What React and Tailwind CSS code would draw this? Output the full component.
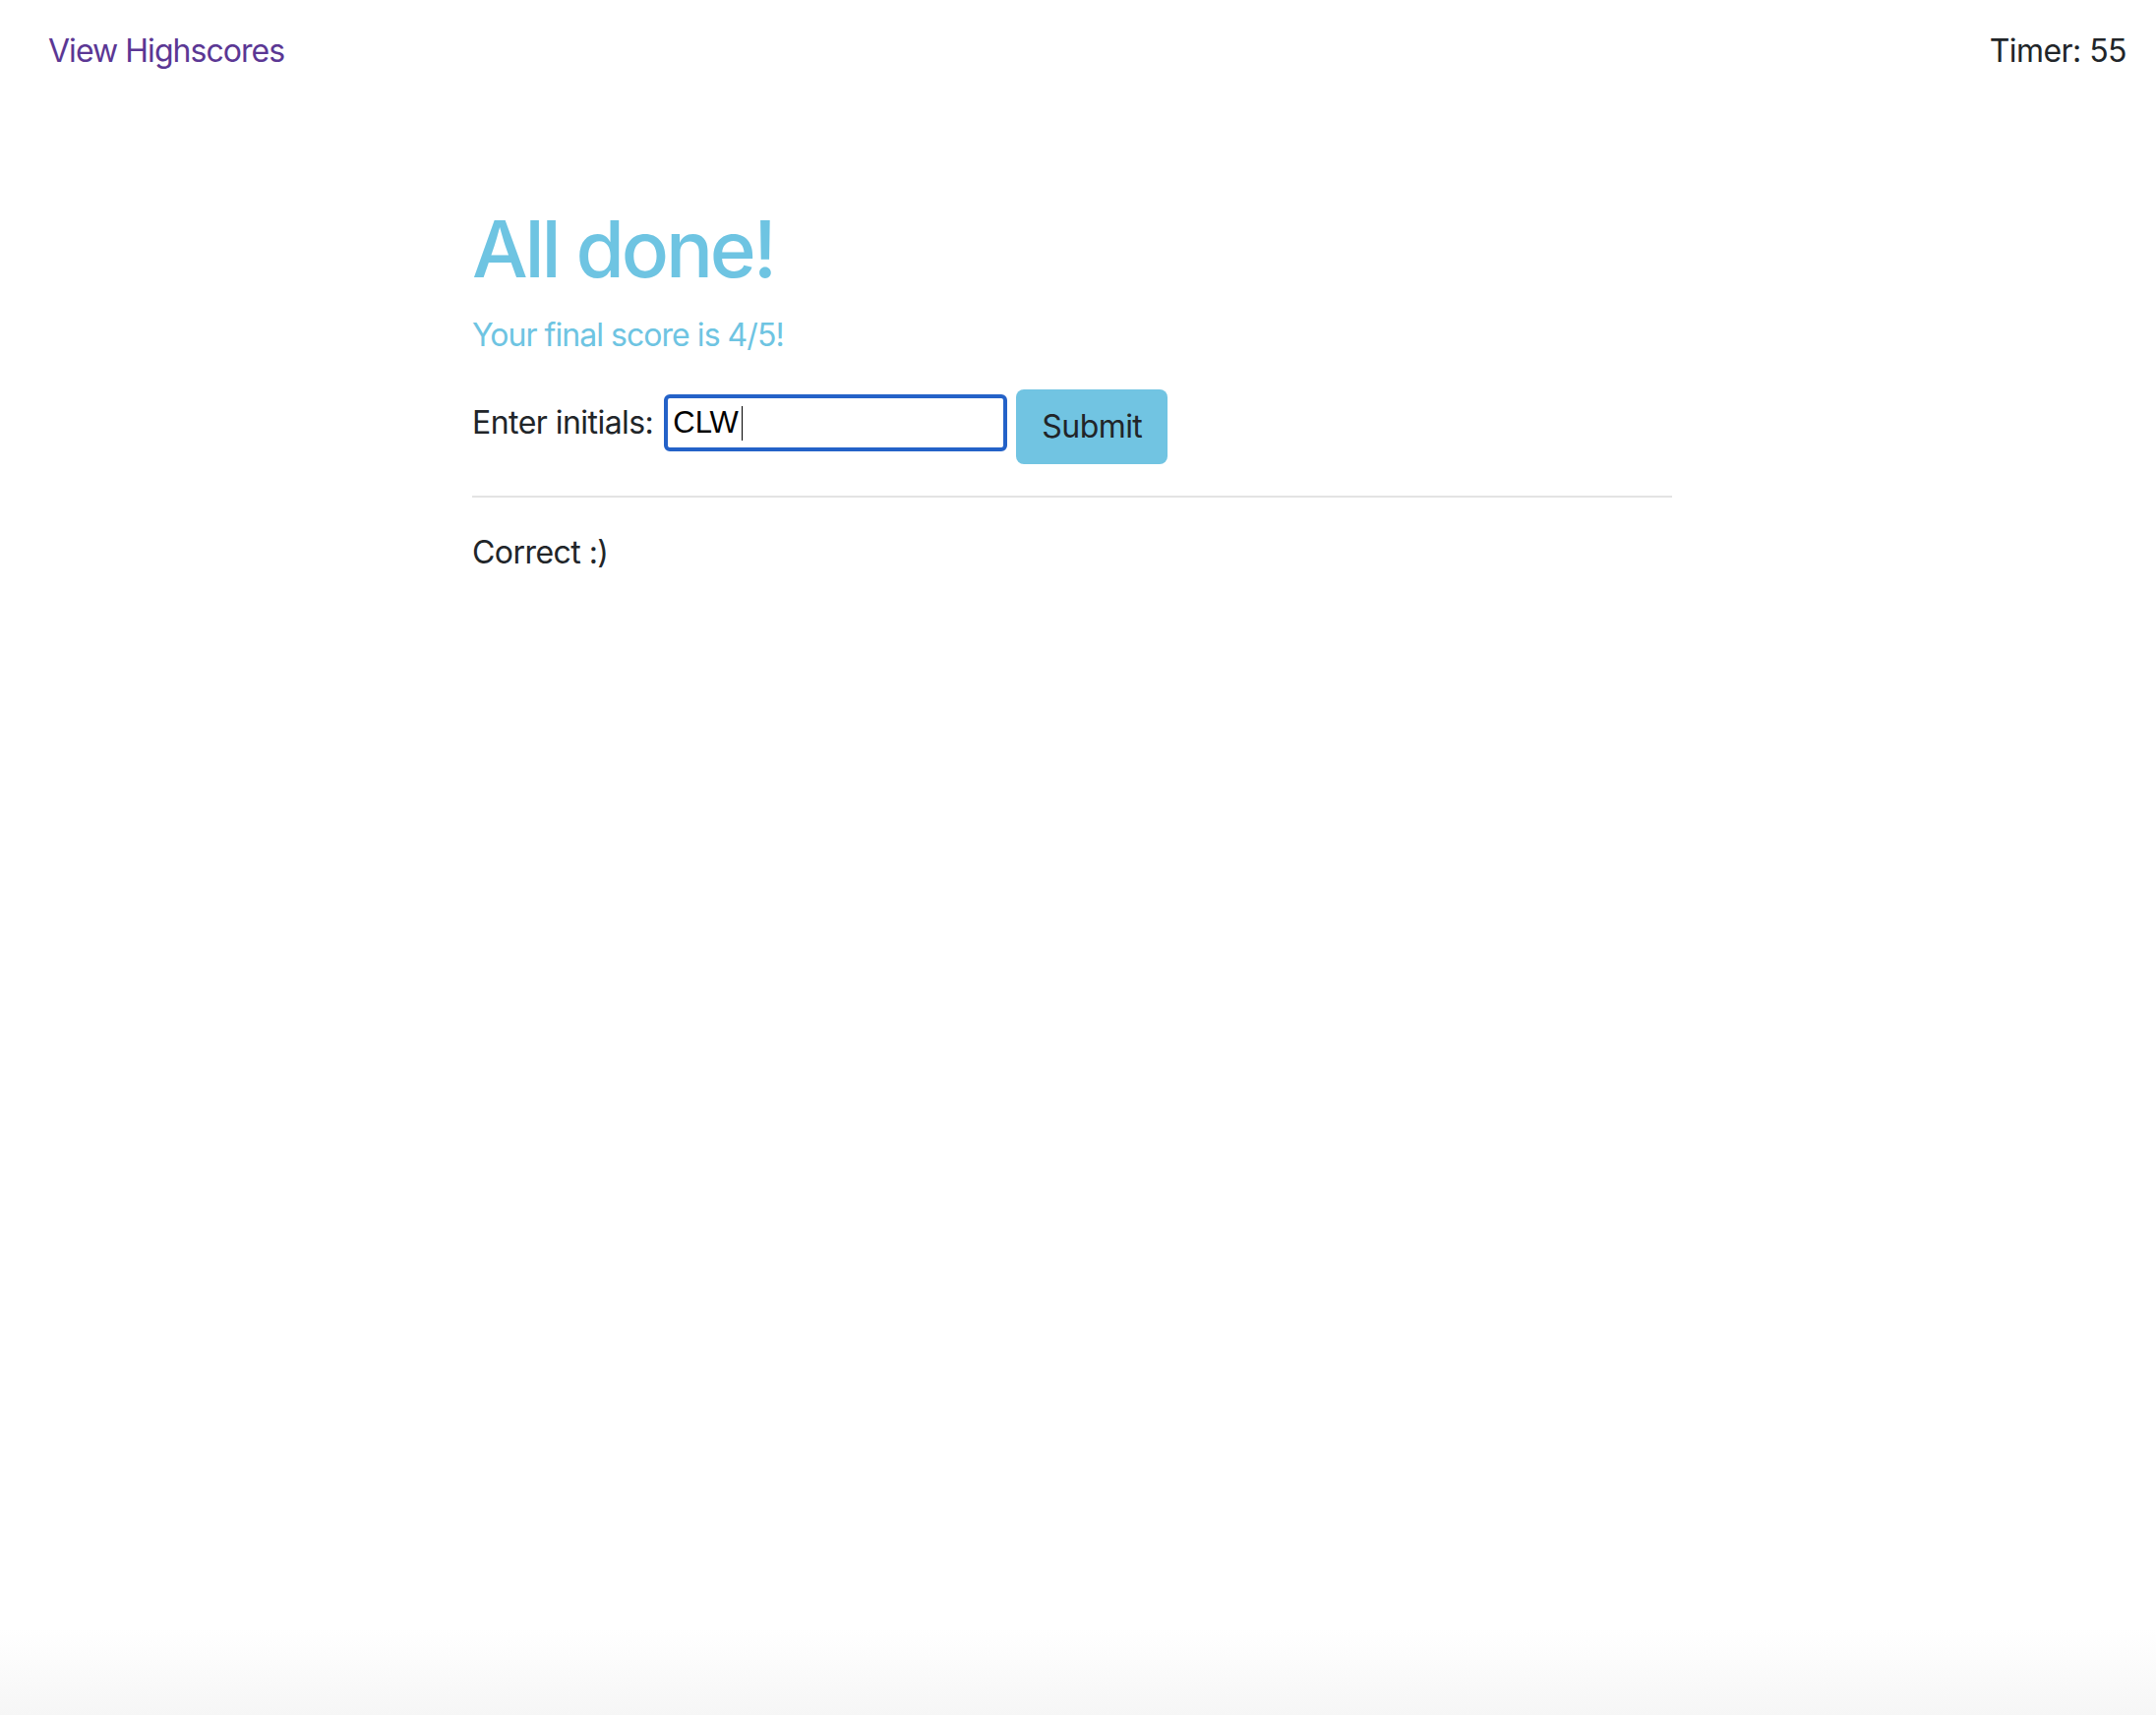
export default function App() {
  return (
    <div className="min-h-[1744px] bg-[linear-gradient(to_bottom,#ffffff_95%,#f6f6f6)] font-['Inter',sans-serif] tracking-[-0.034em] text-[#212529]">
      <header className="flex items-start justify-between pl-[49px] pr-[30px] pt-[28px] text-[32px] leading-[48px]">
        <a href="#" className="tracking-[-0.03em] text-[#5b3794]">
          View Highscores
        </a>
        <span>Timer: 55</span>
      </header>

      <main className="ml-[480px] mt-[129px] w-[1220px]">
        <h1 className="text-[80px] font-medium leading-[96px] tracking-[-0.04em] text-[#6ec4e2]">
          All done!
        </h1>
        <p className="mt-4 text-[32px] leading-[48px] tracking-[-0.03em] text-[#6ec4e2]">Your final score is 4/5!</p>

        <div className="mt-[31px] flex items-start">
          <label className="mt-[10px] text-[32px] leading-[48px]">Enter initials:</label>
          <div
            role="textbox"
            className="ml-[11px] mt-[5px] flex h-[58px] w-[349px] items-center rounded-[6px] border-4 border-[#2462c8] pl-[5px] font-['Liberation_Sans',sans-serif] text-[31px] tracking-normal text-black"
          >
            <span>CLW</span>
            <span className="ml-[3px] h-[35px] w-px bg-black" />
          </div>
          <button className="ml-[9px] h-[76px] w-[154px] rounded-lg bg-[#71c4e2] text-[32px] leading-[48px] text-[#212529]">
            Submit
          </button>
        </div>

        <hr className="mt-8 border-t-2 border-[#e3e3e3]" />

        <p className="mt-8 text-[32px] leading-[48px]">Correct :)</p>
      </main>
    </div>
  );
}
